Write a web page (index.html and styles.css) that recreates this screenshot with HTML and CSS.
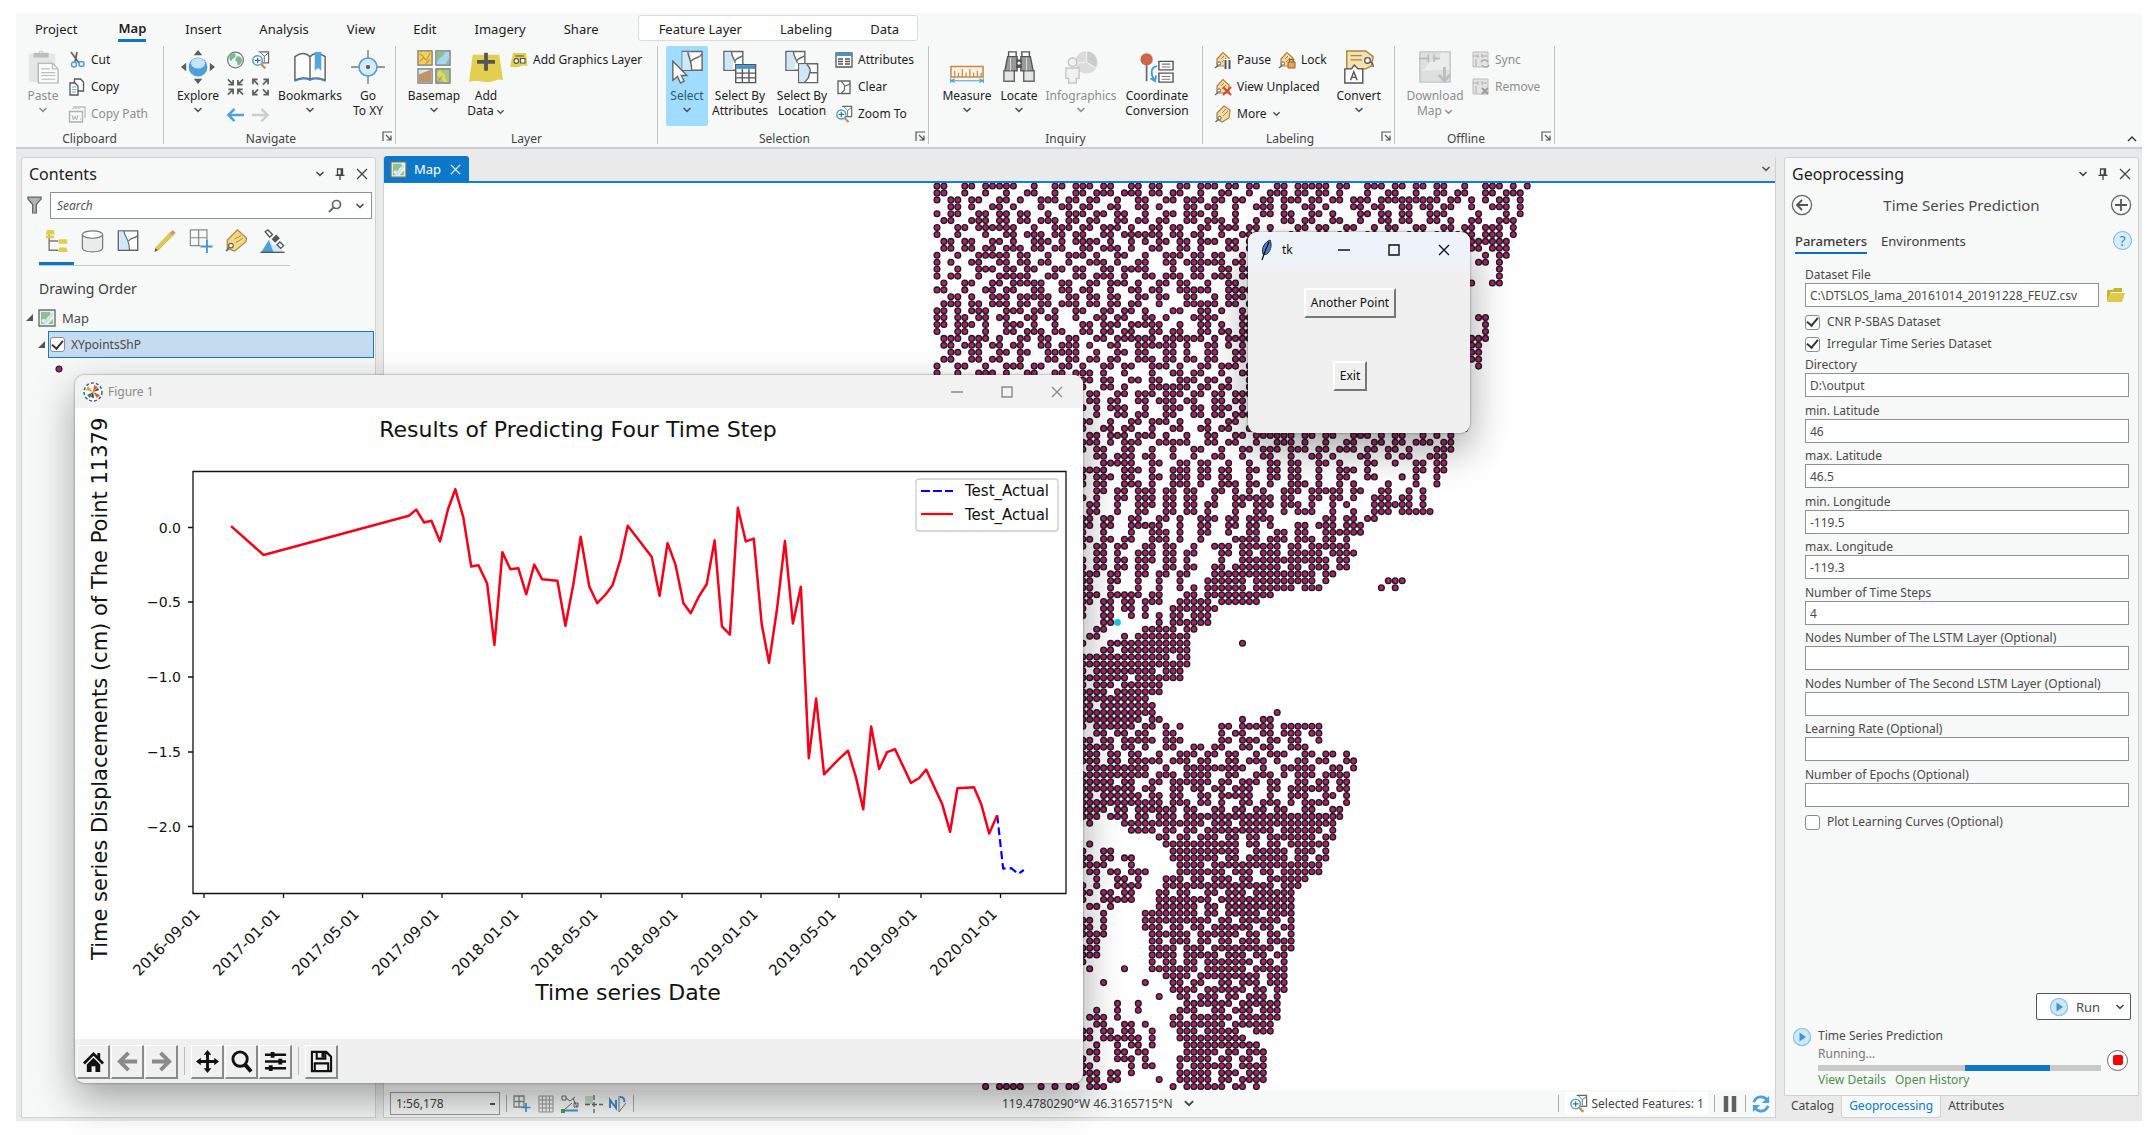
FILE: index.html
```html
<!DOCTYPE html>
<html lang="en">
<head>
<meta charset="utf-8">
<title>Time Series Prediction</title>
<link rel="stylesheet" href="styles.css">
</head>
<body>
<svg class="defs" aria-hidden="true">
  <defs>
    <symbol id="chev" viewBox="0 0 10 6"><path d="M1.5 1l3.5 3.4L8.500 1" fill="none" stroke="currentColor" stroke-width="1.6"/></symbol>
    <symbol id="x" viewBox="0 0 12 12"><path d="M1 1l10 10M11 1L1 11" fill="none" stroke="currentColor" stroke-width="1.3"/></symbol>
    <symbol id="pin" viewBox="0 0 10 12"><path d="M2.500 1h5v6h-5zM6.300 1v6M.5 7.300h9M5 7.500V12" fill="none" stroke="currentColor" stroke-width="1.300"/></symbol>
    <symbol id="launch" viewBox="0 0 10 10"><path d="M1 10V1h9M4 4l4.500 4.500M9 4.500V9H4.500" fill="none" stroke="#555" stroke-width="1.200"/></symbol>
    <symbol id="paste" viewBox="0 0 36 36"><path d="M3 4h28v30H3z" fill="#e4e5e5"/><path d="M8 3h16v5H8z" fill="#bdbfbf"/><circle cx="16" cy="3" r="2" fill="none" stroke="#bdbfbf"/><path d="M13 14h15l6 6v15H13z" fill="#fafafa" stroke="#a9a9a9" stroke-width="1.200"/><path d="M28 14v6h6M16 20h9M16 24h15M16 27h15M16 31h15" fill="none" stroke="#bbb" stroke-width="1.200"/></symbol>
    <symbol id="cut" viewBox="0 0 18 18"><path d="M3 1l8 11M9 1L7 11" stroke="#666" stroke-width="1.800" fill="none"/><circle cx="6" cy="13.500" r="2.500" fill="none" stroke="#4ea0d8" stroke-width="1.500"/><circle cx="13.500" cy="13" r="2.500" fill="none" stroke="#4ea0d8" stroke-width="1.500"/></symbol>
    <symbol id="copy" viewBox="0 0 18 18"><path d="M6.500 1h6l3 3v9h-9z" fill="#fff" stroke="#555" stroke-width="1.300"/><path d="M2 5h5l3 3v9H2z" fill="#fff" stroke="#555" stroke-width="1.300"/><path d="M4 9h4M4 11.500h4M4 14h4" stroke="#69b4e6"/></symbol>
    <symbol id="copypath" viewBox="0 0 18 18"><path d="M5 2h12v11" fill="none" stroke="#bbb" stroke-width="1.300"/><path d="M1.500 6.500h13V17h-13z" fill="#f7f7f7" stroke="#b0b0b0" stroke-width="1.300"/><path d="M4 10l1.500 5L7 11l1.500 4L10 10M12 14h1" fill="none" stroke="#b0b0b0"/><path d="M4 3.500h9" stroke="#bbb" stroke-dasharray="1.500 1.500"/></symbol>
    <symbol id="explore" viewBox="0 0 36 36"><path d="M18 0l4.500 5.500h-9zM18 36l4.500-5.500h-9zM0 18l5.500-4.500v9zM36 18l-5.500-4.500v9z" fill="#5c5c5c"/><circle cx="18" cy="18" r="10" fill="#4d9fd8"/><ellipse cx="18" cy="14" rx="7.500" ry="5.500" fill="#c5e4f7"/></symbol>
    <symbol id="globe" viewBox="0 0 20 20"><circle cx="10" cy="10" r="8.300" fill="#eef4f2" stroke="#777" stroke-width="1.300"/><path d="M5 4c3-2 6-1 5 2s-4 2-4 5c-3 0-3-5-1-7zM12 6c3 0 5 2 5 5-2 5-5 6-5 3s-3-3-2-5 1-3 2-3z" fill="#79b98d"/></symbol>
    <symbol id="zoomsel" viewBox="0 0 20 20"><path d="M8 1.500h10.500V13H12" fill="#fff" stroke="#666" stroke-width="1.300"/><path d="M10 2l4 4 4-3M14 6v6" fill="none" stroke="#666"/><path d="M10.500 14l4.500 5" stroke="#c98a4b" stroke-width="2.400"/><circle cx="7" cy="10.500" r="5" fill="#fff" stroke="#4ea0d8" stroke-width="1.600"/><path d="M4 10.500h6M7 7.500v6" stroke="#4c6a80" stroke-width="1.300"/></symbol>
    <symbol id="fixin" viewBox="0 0 20 20"><path d="M2 2l5 5M18 2l-5 5M2 18l5-5M18 18l-5-5M7.500 2.500v5h-5M12.500 2.500v5h5M7.500 17.500v-5h-5M12.500 17.500v-5h5" fill="none" stroke="#606060" stroke-width="1.800"/></symbol>
    <symbol id="fixout" viewBox="0 0 20 20"><path d="M7.500 7.500L2 2M12.500 7.500L18 2M7.500 12.500L2 18M12.500 12.500L18 18M2 7V2h5M18 7V2h-5M2 13v5h5M18 13v5h-5" fill="none" stroke="#606060" stroke-width="1.800"/></symbol>
    <symbol id="back" viewBox="0 0 20 16"><path d="M19 8H3M9 1.500L2.500 8 9 14.500" fill="none" stroke="currentColor" stroke-width="2.600"/></symbol>
    <symbol id="fwd" viewBox="0 0 20 16"><path d="M1 8h16M11 1.500L17.500 8 11 14.500" fill="none" stroke="currentColor" stroke-width="2.600"/></symbol>
    <symbol id="book" viewBox="0 0 36 36"><path d="M2 7c6-4 12-4 16 0v24c-4-2-11-2-16 1zM34 7c-6-4-12-4-16 0v24c4-2 11-2 16 1z" fill="#fff" stroke="#666" stroke-width="1.600"/><path d="M2 33c6-3 12-3 16-1 4-2 10-2 16 1" fill="none" stroke="#3f8fc6" stroke-width="1.500"/><path d="M23 2h7v20l-3.500-3-3.500 3z" fill="#56a6dc"/></symbol>
    <symbol id="goxy" viewBox="0 0 36 36"><path d="M18 0v10M18 26v10M0 18h10M26 18h10" stroke="#777" stroke-width="1.400"/><circle cx="18" cy="18" r="9.500" fill="#d3ebfa" stroke="#4ea0d8" stroke-width="1.700"/><circle cx="18" cy="18" r="2.200" fill="#555"/></symbol>
    <symbol id="basemap" viewBox="0 0 36 36"><g stroke="#777" stroke-width="1.300"><path d="M1 1h15v15H1z" fill="#ecd35c"/><path d="M20 1h15v15H20z" fill="#a8d5f2"/><path d="M1 20h15v15H1z" fill="#cfe6f7"/><path d="M20 20h15v15H20z" fill="#a5c987"/></g><path d="M3 12l4-4 3 3 4-8M3 4l4 3M9 15l5-5" stroke="#d78a3c" stroke-width="1.200" fill="none"/><path d="M21 2h9c-2 3-3 5-5 6s-3 5-4 5zM30 15l4-6v6z" fill="#8fbf86"/><path d="M2 34V26L14 21h1v13z" fill="#c39366"/><path d="M24 21c2 4 6 3 6 8s4 4 4 5h-6c0-5-6-5-7-8z" fill="#ecd55f"/><path d="M21 34c4-2 3-5 6-6" stroke="#e0773f" fill="none"/></symbol>
    <symbol id="adddata" viewBox="0 0 36 36"><path d="M4 5h28l4 27c-7-3-10 3-18 2S7 32 0 34z" fill="#e2cf4f"/><path d="M18 3v19M8.500 12.500h19" stroke="#555" stroke-width="4"/></symbol>
    <symbol id="graphics" viewBox="0 0 18 18"><path d="M3 2h13l1.500 13C13 13 11 17 0 16z" fill="#e2cf4f"/><circle cx="6.300" cy="10" r="2.300" fill="#fff" stroke="#555" stroke-width="1.200"/><path d="M10.500 7.500h4.500v4.500h-4.500zM5 5h9" fill="#fff" stroke="#555" stroke-width="1.200"/></symbol>
    <symbol id="select" viewBox="0 0 36 36"><path d="M13 1.500h21v20H13z" fill="#fff" stroke="#666" stroke-width="1.500"/><path d="M13 2h9v19h-9z" fill="#cfe8f8"/><path d="M19 2c0 5 4 9 4 19M22 12c4-5 8-2 12-8" fill="none" stroke="#666" stroke-width="1.500"/><path d="M3 12v20l5-4 3 7 4-2-3-6h6z" fill="#fff" stroke="#666" stroke-width="1.500"/></symbol>
    <symbol id="selattr" viewBox="0 0 36 36"><path d="M1 1.500h20v20H1z" fill="#fff" stroke="#666" stroke-width="1.500"/><path d="M2 2h7l2 8-1 11H2z" fill="#cfe8f8"/><path d="M9 2c0 5 4 9 4 12M12 12c4-5 5-3 9-6" fill="none" stroke="#666" stroke-width="1.500"/><path d="M13.500 15.500h21v19h-21z" fill="#fff" stroke="#555" stroke-width="1.500"/><path d="M14 16h20v4H14z" fill="#4793cc"/><path d="M14 24.500h20M14 29.500h20M20.500 20v15M27.500 20v15" stroke="#555" stroke-width="1.500"/></symbol>
    <symbol id="selloc" viewBox="0 0 36 36"><path d="M1 1.500h20v20H1z" fill="#fff" stroke="#666" stroke-width="1.500"/><path d="M2 2h7l2 8-1 11H2z" fill="#cfe8f8"/><path d="M9 2c0 5 4 9 4 12M12 12c4-5 5-3 9-6" fill="none" stroke="#666" stroke-width="1.500"/><path d="M14.500 14.500h20v20h-20z" fill="#fff" stroke="#666" stroke-width="1.500"/><path d="M15 15h8c7 7 2 9 2 14l-4 5h-6z" fill="#cfe8f8"/><path d="M23 15c7 7 2 9 2 14l-4 5M26 24h8" fill="none" stroke="#666" stroke-width="1.500"/></symbol>
    <symbol id="attrs" viewBox="0 0 18 18"><path d="M1 2h16v14H1z" fill="#fff" stroke="#555" stroke-width="1.300"/><path d="M1 2h16v3H1z" fill="#4793cc"/><path d="M3 8h5M10 8h5M3 10.500h5M10 10.500h5M3 13h5M10 13h5" stroke="#555" stroke-width="1.300"/></symbol>
    <symbol id="clear" viewBox="0 0 18 18"><path d="M3 3h12v12.500H3z" fill="#fff" stroke="#666" stroke-width="1.400"/><path d="M6 3l4 5 5-2M9.500 8v4l-3 3" fill="none" stroke="#666" stroke-width="1.200"/></symbol>
    <symbol id="measure" viewBox="0 0 36 36"><path d="M1 17.500h34v11H1z" fill="#fdf3e4" stroke="#c08a4c" stroke-width="1.600"/><path d="M5 28v-6M9 28v-4M13 28v-8M17 28v-4M21 28v-8M25 28v-4M29 28v-6M33 28v-4" stroke="#c08a4c" stroke-width="1.300"/><path d="M1 32.500h34M5 30.500l-3.500 2L5 34.500M31 30.500l3.500 2-3.500 2M.7 30v5M35.300 30v5" stroke="#4ea0d8" fill="none" stroke-width="1.200"/></symbol>
    <symbol id="locate" viewBox="0 0 36 36"><path d="M7 2h8v5H7zM21 2h8v5h-8z" fill="#fff" stroke="#555" stroke-width="1.500"/><path d="M6 7h10v15H3zM20 7h10l3 15H20z" fill="#9a9a9a" stroke="#555" stroke-width="1.500"/><path d="M15 10h6v9h-6z" fill="#555"/><path d="M2 22h11v11H2zM23 22h11v11H23z" fill="#e5e5e5" stroke="#666" stroke-width="1.500"/><path d="M9 8v14M26 8v14" stroke="#ddd"/><circle cx="18" cy="14" r="1.500" fill="#fff"/></symbol>
    <symbol id="info" viewBox="0 0 36 36"><circle cx="24" cy="13" r="12" fill="#dcdcdc"/><path d="M24 13V1a12 12 0 0 1 10 18zM24 13L12 14" fill="#cbcbcb" stroke="#f7f7f7"/><circle cx="9" cy="13" r="4.500" fill="#f1f1f1" stroke="#c6c6c6" stroke-width="1.500"/><path d="M2 19h14v11h-3v5H5v-5H2z" fill="#f1f1f1" stroke="#c6c6c6" stroke-width="1.500"/></symbol>
    <symbol id="coord" viewBox="0 0 36 36"><path d="M7 10v23" stroke="#666" stroke-width="1.800"/><circle cx="7" cy="10" r="6.500" fill="#cf6548"/><path d="M20 12h15v9H20zM20 24.500h15v9.500H20z" fill="#fff" stroke="#555" stroke-width="1.500"/><path d="M23 15h9M23 18h9M23 28h9M23 31h9" stroke="#777" stroke-width="1.200"/><path d="M18 17c-7 1-7 9-3 14M11 30l5 3 1-6" fill="none" stroke="#3f9ad6" stroke-width="1.800"/></symbol>
    <symbol id="tag" viewBox="0 0 18 18"><path d="M3 8l7-7 6 4-1 8-7 4-5-3z" fill="#f3dca4" stroke="#ad8242" stroke-width="1.200"/><path d="M8 8l4-4M9 11l5-5" stroke="#ad8242"/><circle cx="5.500" cy="13" r="1.700" fill="#fff" stroke="#666"/><path d="M4.500 14.500L1.500 17" stroke="#666" stroke-width="1.400"/></symbol>
    <symbol id="tagtop" viewBox="0 0 18 18"><path d="M3 8l6-6.500L15 7v8H3z" fill="#f3dca4" stroke="#ad8242" stroke-width="1.200"/><path d="M7 8l3-3M8 11l4-4" stroke="#ad8242"/><circle cx="5" cy="12.500" r="1.700" fill="#fff" stroke="#666"/><path d="M4 14.500L1 17" stroke="#666" stroke-width="1.400"/></symbol>
    <symbol id="convert" viewBox="0 0 36 36"><path d="M5 1h20l8 6-2 10-6 3H5z" fill="#f6e2ae" stroke="#ad8242" stroke-width="1.500"/><path d="M9 6h12M9 10.500h12" stroke="#ad8242" stroke-width="1.300"/><circle cx="27" cy="11" r="3" fill="#fff" stroke="#555" stroke-width="1.400"/><path d="M29 13c3-1 4 2 4 5" fill="none" stroke="#555" stroke-width="1.400"/><path d="M3 20h7l3-4 4 4h5v15H3z" fill="#fff" stroke="#555" stroke-width="1.500"/><path d="M9 32l3.500-9 3.500 9M10.500 29h4" fill="none" stroke="#555" stroke-width="1.500"/></symbol>
    <symbol id="download" viewBox="0 0 36 36"><path d="M2 2h32v32H2z" fill="#dedfdf" stroke="#c3c3c3" stroke-width="1.500"/><path d="M3 22c10-4 4-9 14-10s6-8 7-9h9v18" fill="#ececec"/><path d="M1 9h10M23 9h-6M11 5v8M17 5v8" stroke="#b5b5b5" stroke-width="1.500"/><path d="M28 18v14M22 26l6 7 6-7" stroke="#bdbdbd" stroke-width="3" fill="none"/></symbol>
    <symbol id="sync" viewBox="0 0 18 18"><path d="M1 1h15v15H1z" fill="#e3e3e3" stroke="#bbb"/><path d="M1 5h5M10 5h5M6 3v4M10 3v4M4 8v7" stroke="#aaa"/><path d="M9 11c2-3 6-2 7 0M17 14c-2 3-6 2-7 0" stroke="#aaa" stroke-width="1.600" fill="#f7f8f8"/></symbol>
    <symbol id="remove" viewBox="0 0 18 18"><path d="M1 1h15v15H1z" fill="#e3e3e3" stroke="#bbb"/><path d="M1 5h5M10 5h5M6 3v4M10 3v4M4 8v7" stroke="#aaa"/><path d="M10 10l6 6M16 10l-6 6" stroke="#999" stroke-width="1.800"/></symbol>
    <symbol id="mapicon" viewBox="0 0 18 18"><path d="M1 1h16v16H1z" fill="#eaf3ea" stroke="#6d6d6d" stroke-width="1.400"/><path d="M3 3h9c2 3-2 4-3 6s-2 2-3 1-2 2-3 2z" fill="#8fbf95"/><path d="M15 3c-4 4-3 6-6 7s-4 4-4 5h3l3-3 2-4 2-1z" fill="#c7e3f6"/><path d="M10 15l5-5v5zM3 11l3 4H3z" fill="#8fbf95"/></symbol>
    <symbol id="play" viewBox="0 0 20 20"><circle cx="10" cy="10" r="8.600" fill="#cfe8f8" stroke="#8cc4ea" stroke-width="1.300"/><path d="M7.500 5.500L14 10l-6.500 4.500z" fill="#3f95cf"/></symbol>
    <symbol id="grid" viewBox="0 0 18 18"><path d="M1 1h10v11H1zM6 1v11M1 6.500h10" fill="none" stroke="#888" stroke-width="1.300"/><path d="M13 8v9M8.500 12.500h9" stroke="#4595cc" stroke-width="1.700"/></symbol>
  </defs>
</svg>
<div class="app">
  <header class="ribbon">
    <nav class="tabs">
      <a href="#">Project</a><a href="#" class="on">Map</a><a href="#">Insert</a><a href="#">Analysis</a><a href="#">View</a><a href="#">Edit</a><a href="#">Imagery</a><a href="#">Share</a>
      <div class="context"><a href="#">Feature Layer</a><a href="#">Labeling</a><a href="#">Data</a></div>
    </nav>
    <div class="groups">
      <section class="group g-clip">
        <div class="tools">
          <button class="big off w44"><svg><use href="#paste"/></svg><span>Paste</span><svg class="chev"><use href="#chev"/></svg></button>
          <div class="col">
            <button class="small"><svg><use href="#cut"/></svg>Cut</button>
            <button class="small"><svg><use href="#copy"/></svg>Copy</button>
            <button class="small off"><svg><use href="#copypath"/></svg>Copy Path</button>
          </div>
        </div>
        <h2>Clipboard</h2>
      </section>
      <section class="group g-nav launcher">
        <div class="tools">
          <button class="big w52"><svg><use href="#explore"/></svg><span>Explore</span><svg class="chev"><use href="#chev"/></svg></button>
          <div class="navgrid">
            <svg><use href="#globe"/></svg><svg><use href="#zoomsel"/></svg>
            <svg><use href="#fixin"/></svg><svg><use href="#fixout"/></svg>
            <svg class="blue"><use href="#back"/></svg><svg class="grey"><use href="#fwd"/></svg>
          </div>
          <button class="big w72"><svg><use href="#book"/></svg><span>Bookmarks</span><svg class="chev"><use href="#chev"/></svg></button>
          <button class="big w44"><svg><use href="#goxy"/></svg><span>Go<br>To XY</span></button>
        </div>
        <h2>Navigate</h2><svg class="launch"><use href="#launch"/></svg>
      </section>
      <section class="group g-layer">
        <div class="tools">
          <button class="big w60"><svg><use href="#basemap"/></svg><span>Basemap</span><svg class="chev"><use href="#chev"/></svg></button>
          <button class="big w44"><svg><use href="#adddata"/></svg><span>Add<br>Data<svg class="inchev"><use href="#chev"/></svg></span></button>
          <div class="col">
            <button class="small"><svg><use href="#graphics"/></svg>Add Graphics Layer</button>
          </div>
        </div>
        <h2>Layer</h2>
      </section>
      <section class="group g-sel launcher">
        <div class="tools">
          <button class="big active w42"><svg><use href="#select"/></svg><span>Select</span><svg class="chev"><use href="#chev"/></svg></button>
          <button class="big w64"><svg><use href="#selattr"/></svg><span>Select By<br>Attributes</span></button>
          <button class="big w60"><svg><use href="#selloc"/></svg><span>Select By<br>Location</span></button>
          <div class="col">
            <button class="small"><svg><use href="#attrs"/></svg>Attributes</button>
            <button class="small"><svg><use href="#clear"/></svg>Clear</button>
            <button class="small"><svg><use href="#zoomsel"/></svg>Zoom To</button>
          </div>
        </div>
        <h2>Selection</h2><svg class="launch"><use href="#launch"/></svg>
      </section>
      <section class="group g-inq">
        <div class="tools">
          <button class="big w60"><svg><use href="#measure"/></svg><span>Measure</span><svg class="chev"><use href="#chev"/></svg></button>
          <button class="big w44"><svg><use href="#locate"/></svg><span>Locate</span><svg class="chev"><use href="#chev"/></svg></button>
          <button class="big off w80"><svg><use href="#info"/></svg><span>Infographics</span><svg class="chev"><use href="#chev"/></svg></button>
          <button class="big w72"><svg><use href="#coord"/></svg><span>Coordinate<br>Conversion</span></button>
        </div>
        <h2>Inquiry</h2>
      </section>
      <section class="group g-lab launcher">
        <div class="tools">
          <div class="col">
            <div class="pair">
              <button class="small"><svg viewBox="0 0 18 18"><use href="#tagtop"/><path d="M10 8h8v10h-8z" fill="#f7f8f8"/><path d="M11.500 9v9M15.500 9v9" stroke="#555" stroke-width="2"/></svg>Pause</button>
              <button class="small"><svg viewBox="0 0 18 18"><use href="#tagtop"/><path d="M10 11h7v6h-7z" fill="#e6a654" stroke="#96622a"/><path d="M11.500 11V8.500h4V11" fill="none" stroke="#96622a" stroke-width="1.300"/></svg>Lock</button>
            </div>
            <button class="small"><svg viewBox="0 0 18 18"><use href="#tagtop"/><path d="M9 9l8 8M17 9l-8 8" stroke="#d34a2d" stroke-width="2.200"/></svg>View Unplaced</button>
            <button class="small"><svg><use href="#tag"/></svg>More<svg class="inchev"><use href="#chev"/></svg></button>
          </div>
          <button class="big w52"><svg><use href="#convert"/></svg><span>Convert</span><svg class="chev"><use href="#chev"/></svg></button>
        </div>
        <h2>Labeling</h2><svg class="launch"><use href="#launch"/></svg>
      </section>
      <section class="group g-off launcher">
        <div class="tools">
          <button class="big off w64"><svg><use href="#download"/></svg><span>Download<br>Map<svg class="inchev"><use href="#chev"/></svg></span></button>
          <div class="col">
            <button class="small off"><svg><use href="#sync"/></svg>Sync</button>
            <button class="small off"><svg><use href="#remove"/></svg>Remove</button>
          </div>
        </div>
        <h2>Offline</h2><svg class="launch"><use href="#launch"/></svg>
      </section>
      <button class="collapse" aria-label="Collapse ribbon"><svg viewBox="0 0 10 6"><path d="M1 5l4-4 4 4" fill="none" stroke="#333" stroke-width="1.400"/></svg></button>
    </div>
  </header>

  <main class="workspace">
    <aside class="pane contents">
      <div class="panehead"><h1>Contents</h1><svg class="c"><use href="#chev"/></svg><svg class="p"><use href="#pin"/></svg><svg class="k"><use href="#x"/></svg></div>
      <div class="searchrow">
        <svg class="funnel" viewBox="0 0 16 20"><path d="M1 1h14v2L10 9v9H6V9L1 3z" fill="#b3b3b3" stroke="#666" stroke-width="1.300"/></svg>
        <label class="search"><input type="text" placeholder="Search" aria-label="Search"><svg class="mag" viewBox="0 0 14 14"><circle cx="8.500" cy="5.500" r="4" fill="none" stroke="#666" stroke-width="1.700"/><path d="M5.500 8.500L1 13" stroke="#666" stroke-width="2"/></svg><svg class="c"><use href="#chev"/></svg></label>
      </div>
      <div class="views">
        <svg class="on" viewBox="0 0 26 26"><path d="M5 6v17h10M5 13h10" fill="none" stroke="#777" stroke-width="1.500"/><path d="M3 1h7l1 5H1zM2 7h8l1 3H1zM16 11h8l1 5H15zM16 20h8l1 5H15z" fill="#e0cd4c"/></svg>
        <svg viewBox="0 0 26 26"><path d="M2 6v15c2 5 20 5 22 0V6" fill="#ececec" stroke="#777" stroke-width="1.300"/><ellipse cx="13" cy="6" rx="11" ry="4" fill="#fff" stroke="#777" stroke-width="1.300"/></svg>
        <svg viewBox="0 0 26 26"><path d="M2 2h21v21H2z" fill="#fff" stroke="#666" stroke-width="1.500"/><path d="M3 3h5c1 7 6 9 5 19H3z" fill="#cfe8f8"/><path d="M8 2c1 8 6 8 6 21M13 13c3-4 6-2 10-6" fill="none" stroke="#666" stroke-width="1.300"/></svg>
        <svg viewBox="0 0 26 26"><path d="M3 21L19 4l3 3L6 23z" fill="#e3cb45" stroke="#b79c2a" stroke-width=".700"/><path d="M19 4l3-3 3 3-3 3z" fill="#e08a78"/><path d="M3 21l-1 4 4-2z" fill="#555"/></svg>
        <svg viewBox="0 0 26 26"><path d="M2 1h18v17H2zM11 1v17M2 9.500h18" fill="none" stroke="#888" stroke-width="1.300"/><path d="M13 12h13v13H13z" fill="#f7f8f8"/><path d="M20 12v14M13 19h13" stroke="#4595cc" stroke-width="2"/></svg>
        <svg viewBox="0 0 26 26"><path d="M3 12L14 1l10 9-1 4-12 10-8-3z" fill="#f3d883" stroke="#ad8242" stroke-width="1.300"/><path d="M11 11l7-4M12 15l8-5" stroke="#ad8242"/><circle cx="7" cy="18" r="2.500" fill="#fff" stroke="#666" stroke-width="1.300"/><path d="M5 20l-3 4" stroke="#666" stroke-width="2"/></svg>
        <svg viewBox="0 0 26 26"><path d="M1 25L9 12l8 13z" fill="#4ea0d8"/><path d="M9 12l4 6 5-2 7 9H14z" fill="#cfe8f8"/><path d="M0 25.300h26" stroke="#555" stroke-width="1.500"/><path d="M5 3l3-2 5 5-3 3zM18 17l3-3 4 4-3 3z" fill="#fff" stroke="#555" stroke-width="1.500"/><path d="M12 11l5-5 4 4-5 5z" fill="#555"/></svg>
      </div>
      <h3>Drawing Order</h3>
      <div class="node"><i class="tri"></i><svg><use href="#mapicon"/></svg><span>Map</span></div>
      <div class="layer"><i class="tri"></i><label><input type="checkbox" checked><span>XYpointsShP</span></label></div>
      <svg class="sym" viewBox="0 0 8 8"><circle cx="4" cy="4" r="3" fill="#a8246b" stroke="#222" stroke-width="1.200"/></svg>
    </aside>

    <section class="mapview">
      <div class="maptabs"><div class="maptab"><svg><use href="#mapicon"/></svg><span>Map</span><svg class="k"><use href="#x"/></svg></div><svg class="c"><use href="#chev"/></svg></div>
      <svg class="canvas" id="points" aria-label="Point layer"></svg>
      <div class="status">
        <select class="scale" aria-label="Scale"><option>1:56,178</option></select>
        <i class="bar"></i>
        <svg><use href="#grid"/></svg>
        <svg viewBox="0 0 18 18"><path d="M2 1h14v16H2zM5.500 1v16M9 1v16M12.500 1v16M2 5h14M2 9h14M2 13h14" fill="none" stroke="#999"/></svg>
        <svg viewBox="0 0 18 18"><path d="M1 1h4v4H1zM13 8h4v4h-4zM5 3l4 3 5-4M3 15l8-7M12 3l4 9" fill="none" stroke="#666"/><path d="M2 15.500h15" stroke="#4595cc" stroke-width="2"/><path d="M0 14h4v4H0z" fill="#4d9a50"/></svg>
        <svg viewBox="0 0 18 18"><path d="M0 1h8v8H0z" fill="#c4dfc4"/><path d="M9 0v18M0 9.500h18" stroke="#666" stroke-width="1.300" stroke-dasharray="5 2"/></svg>
        <svg viewBox="0 0 18 18"><path d="M1 13V5l6 8V5" fill="none" stroke="#3f8fc6" stroke-width="2"/><path d="M10 1v16M10 17l7-9" stroke="#777" fill="none"/><path d="M11 2c4 0 5 3 4 5" stroke="#3f8fc6" stroke-width="2" fill="none"/></svg>
        <i class="bar"></i>
        <span class="coords">119.4780290°W 46.3165715°N</span><svg class="c"><use href="#chev"/></svg>
        <i class="bar"></i>
        <span class="feat"><svg><use href="#zoomsel"/></svg>Selected Features: 1</span>
        <i class="bar"></i>
        <svg viewBox="0 0 18 18"><path d="M5 1v16M13 1v16" stroke="#606060" stroke-width="4.500"/></svg>
        <i class="bar"></i>
        <svg class="refresh" viewBox="0 0 20 20"><path d="M2 8c3-8 12-7 15-2M18 12c-3 8-12 7-15 2" fill="none" stroke="#4ea0d8" stroke-width="3"/><path d="M19 1v8h-8zM1 19v-8h8z" fill="#4ea0d8"/></svg>
      </div>
    </section>

    <aside class="geocol">
      <div class="pane geo">
        <div class="panehead"><h1>Geoprocessing</h1><svg class="c"><use href="#chev"/></svg><svg class="p"><use href="#pin"/></svg><svg class="k"><use href="#x"/></svg></div>
        <div class="toolhead">
          <svg viewBox="0 0 22 22"><circle cx="11" cy="11" r="9.600" fill="none" stroke="#666" stroke-width="1.300"/><path d="M17 11H6M11 6l-5 5 5 5" fill="none" stroke="#555" stroke-width="1.800"/></svg>
          <span>Time Series Prediction</span>
          <svg viewBox="0 0 22 22"><circle cx="11" cy="11" r="9.600" fill="none" stroke="#666" stroke-width="1.300"/><path d="M11 5v12M5 11h12" stroke="#555" stroke-width="1.800"/></svg>
        </div>
        <div class="geotabs"><a href="#" class="on">Parameters</a><a href="#">Environments</a><span class="help">?</span></div>
        <form class="params">
          <div class="field"><label for="f0">Dataset File</label><div class="filerow"><input id="f0" type="text" value="C:\DTSLOS_lama_20161014_20191228_FEUZ.csv"><svg viewBox="0 0 18 14"><path d="M0 14V2h6l1-2h8v4H4z" fill="#c9b432"/><path d="M4 5h14l-3 9H0z" fill="#dfc949"/></svg></div></div>
          <label class="check"><input type="checkbox" checked>CNR P-SBAS Dataset</label>
          <label class="check"><input type="checkbox" checked>Irregular Time Series Dataset</label>
          <div class="field"><label for="f1">Directory</label><input id="f1" type="text" value="D:\output"></div>
          <div class="field"><label for="f2">min. Latitude</label><input id="f2" type="text" value="46"></div>
          <div class="field"><label for="f3">max. Latitude</label><input id="f3" type="text" value="46.5"></div>
          <div class="field"><label for="f4">min. Longitude</label><input id="f4" type="text" value="-119.5"></div>
          <div class="field"><label for="f5">max. Longitude</label><input id="f5" type="text" value="-119.3"></div>
          <div class="field"><label for="f6">Number of Time Steps</label><input id="f6" type="text" value="4"></div>
          <div class="field"><label for="f7">Nodes Number of The LSTM Layer (Optional)</label><input id="f7" type="text"></div>
          <div class="field"><label for="f8">Nodes Number of The Second LSTM Layer (Optional)</label><input id="f8" type="text"></div>
          <div class="field"><label for="f9">Learning Rate (Optional)</label><input id="f9" type="text"></div>
          <div class="field"><label for="f10">Number of Epochs (Optional)</label><input id="f10" type="text"></div>
          <label class="check"><input type="checkbox">Plot Learning Curves (Optional)</label>
        </form>
        <button class="run"><svg class="pl"><use href="#play"/></svg><span>Run</span><svg class="c"><use href="#chev"/></svg></button>
        <div class="job">
          <svg class="pl"><use href="#play"/></svg>
          <div class="jobtext">
            <div>Time Series Prediction</div>
            <div class="dim">Running...</div>
            <div class="progress"><i></i></div>
            <div class="links"><a href="#">View Details</a><a href="#">Open History</a></div>
          </div>
          <button class="stop" aria-label="Stop"><i></i></button>
        </div>
      </div>
      <nav class="docktabs"><a href="#">Catalog</a><a href="#" class="on">Geoprocessing</a><a href="#">Attributes</a></nav>
    </aside>
  </main>

  <section class="window figure">
    <div class="titlebar">
      <svg class="mpl" viewBox="0 0 20 20"><circle cx="10" cy="10" r="9" fill="#fff" stroke="#2b6a9b" stroke-width="1.500" stroke-dasharray="3 2"/><path d="M10 10L5 4 3 8z" fill="#e9a13b"/><path d="M10 10l1-7 4 2z" fill="#e0602c"/><path d="M10 10l7 3-3 3z" fill="#d95a2b"/><path d="M10 10l-6 3 3 3z" fill="#3c7f53"/><path d="M10 10l1 6-3-1zM10 10l6-2-1-2z" fill="#333"/></svg>
      <span>Figure 1</span>
      <svg viewBox="0 0 12 12"><path d="M0 6h12" stroke="currentColor" stroke-width="1.400"/></svg><svg viewBox="0 0 12 12"><path d="M1 1h10v10H1z" fill="none" stroke="currentColor" stroke-width="1.400"/></svg><svg><use href="#x"/></svg>
    </div>
    <svg class="plot" viewBox="75 408 1008 631">
      <g font-family="DejaVu Sans" fill="#111">
        <text x="578" y="437" font-size="22" text-anchor="middle">Results of Predicting Four Time Step</text>
        <text x="628" y="1000" font-size="22" text-anchor="middle">Time series Date</text>
        <text transform="translate(107 960) rotate(-90)" font-size="21">Time series Displacements (cm) of The Point 11379</text>
        <g font-size="14" text-anchor="end"><text x="181" y="533">0.0</text><text x="181" y="607">−0.5</text><text x="181" y="682">−1.0</text><text x="181" y="757">−1.5</text><text x="181" y="832">−2.0</text></g>
        <g font-size="15" text-anchor="end">
          <text transform="translate(201 915) rotate(-45)">2016-09-01</text><text transform="translate(281 915) rotate(-45)">2017-01-01</text><text transform="translate(360 915) rotate(-45)">2017-05-01</text><text transform="translate(440 915) rotate(-45)">2017-09-01</text><text transform="translate(520 915) rotate(-45)">2018-01-01</text><text transform="translate(599 915) rotate(-45)">2018-05-01</text><text transform="translate(679 915) rotate(-45)">2018-09-01</text><text transform="translate(759 915) rotate(-45)">2019-01-01</text><text transform="translate(837 915) rotate(-45)">2019-05-01</text><text transform="translate(918 915) rotate(-45)">2019-09-01</text><text transform="translate(998 915) rotate(-45)">2020-01-01</text>
        </g>
      </g>
      <path d="M193 471.500H1066V893.500H193zM193 527.500h-5M193 602h-5M193 677h-5M193 752h-5M193 826.500h-5M204 893v5M283.500 893v5M362.500 893v5M442 893v5M522 893v5M601 893v5M682 893v5M761 893v5M839 893v5M921 893v5M1000.500 893v5" fill="none" stroke="#111" stroke-width="1.300"/>
      <g transform="translate(60 370) scale(.66326 .35714)" fill="none" stroke-linejoin="round">
        <polyline vector-effect="non-scaling-stroke" stroke="#00f" stroke-width="2.200" stroke-dasharray="8 4" points="1413,1247 1422,1396 1434,1395 1445,1411 1453,1400"/>
        <polyline vector-effect="non-scaling-stroke" stroke="#f5001a" stroke-width="2.500" points="258,437 307,518 526,408 537,391 549,427 560,422 573,480 585,390 596,334 608,412 620,550 631,547 644,598 655,770 667,510 679,558 691,555 703,628 715,545 727,586 750,590 762,716 774,600 785,467 798,606 810,653 822,630 833,603 845,530 856,436 892,523 904,632 916,485 928,545 940,653 951,681 963,635 975,600 987,477 998,718 1010,741 1022,386 1034,480 1046,472 1058,712 1069,820 1081,670 1093,479 1105,710 1117,607 1129,1087 1140,920 1152,1132 1175,1088 1188,1066 1200,1140 1211,1230 1223,998 1235,1117 1247,1070 1259,1062 1283,1156 1295,1143 1306,1119 1330,1215 1342,1293 1353,1171 1378,1168 1389,1216 1401,1298 1413,1247"/>
      </g>
      <rect x="916" y="479" width="142" height="52" rx="3" fill="#fff" stroke="#ccc" stroke-width="1.300"/>
      <path d="M921 491h32" stroke="#00f" stroke-width="2.200" stroke-dasharray="9 3"/><path d="M921 514h32" stroke="#f00" stroke-width="2.200"/>
      <g font-family="DejaVu Sans" font-size="15" fill="#111"><text x="965" y="496">Test_Actual</text><text x="965" y="520">Test_Actual</text></g>
    </svg>
    <div class="navbar">
      <button aria-label="Home"><svg viewBox="0 0 24 24"><path d="M12 2L1 13l2 2 9-9 9 9 2-2-4-4V3h-3v3zM5 15v8h5v-6h4v6h5v-8l-7-7z" fill="#111"/></svg></button>
      <button aria-label="Back"><svg viewBox="0 0 24 24"><path d="M22 12H5M13 3l-9 9 9 9" fill="none" stroke="#8a8a8a" stroke-width="4"/></svg></button>
      <button aria-label="Forward"><svg viewBox="0 0 24 24"><path d="M2 12h17M11 3l9 9-9 9" fill="none" stroke="#8a8a8a" stroke-width="4"/></svg></button>
      <i></i>
      <button aria-label="Pan"><svg viewBox="0 0 24 24"><path d="M12 2v20M2 12h20" stroke="#111" stroke-width="3"/><path d="M12 0l4 5H8zM12 24l4-5H8zM0 12l5-4v8zM24 12l-5-4v8z" fill="#111"/></svg></button>
      <button aria-label="Zoom"><svg viewBox="0 0 24 24"><circle cx="10.500" cy="9.500" r="7.500" fill="none" stroke="#111" stroke-width="3"/><path d="M15.500 15l6.500 7.500" stroke="#111" stroke-width="4"/></svg></button>
      <button aria-label="Subplots"><svg viewBox="0 0 24 24"><path d="M1 5h22M1 12h22M1 19h22" stroke="#111" stroke-width="2.500"/><path d="M9 2v6M17 9v6M7 16v6" stroke="#111" stroke-width="4"/></svg></button>
      <i></i>
      <button aria-label="Save"><svg viewBox="0 0 24 24"><path d="M2 2h15l5 5v15H2zM7 2v7h9V2M5 22v-8h14v8" fill="none" stroke="#111" stroke-width="2.200"/><path d="M12 3h3v5h-3z" fill="#111"/></svg></button>
    </div>
  </section>

  <section class="window tk">
    <div class="titlebar">
      <svg class="feather" viewBox="0 0 12 22"><path d="M10 1c2 4 1 10-2 13-2 2-4 2-5 1C1 9 5 3 10 1z" fill="#4a7fd0" stroke="#222"/><path d="M9 3L4 15 2 21" fill="none" stroke="#111" stroke-width="1.300"/></svg>
      <span>tk</span>
      <svg viewBox="0 0 12 12"><path d="M0 6h12" stroke="currentColor" stroke-width="1.400"/></svg><svg viewBox="0 0 12 12"><path d="M1 1h10v10H1z" fill="none" stroke="currentColor" stroke-width="1.400"/></svg><svg><use href="#x"/></svg>
    </div>
    <div class="tkbody"><button>Another Point</button><button>Exit</button></div>
  </section>
</div>
<script src="points.js"></script>
</body>
</html>
```
FILE: styles.css
```css
* { box-sizing: border-box; }
body { margin: 0; background: #fff; font: 13px/18px "Noto Sans", sans-serif; color: #4a4a4a; }
h1, h2, h3 { margin: 0; font-weight: 400; }
a { color: inherit; text-decoration: none; }
button, input, select { font: inherit; color: inherit; }
button { background: none; border: 0; padding: 0; }
svg { display: block; flex: none; }
.defs { position: absolute; width: 0; height: 0; }
.app { position: relative; display: flex; flex-direction: column; height: calc(100vh - 27px); margin: 13px 13px 14px 16px; background: #eaeaea; }

.ribbon { height: 136px; background: #f7f8f8; border-bottom: 2px solid #c9ccd2; color: #1c1c1c; }
.tabs { display: flex; gap: 38px; height: 33px; padding: 2px 0 0 19px; align-items: flex-start; }
.tabs a { line-height: 24px; padding-top: 2px; border-bottom: 3px solid transparent; }
.tabs .on { margin: 0 1px 0 3px; border-color: #0c78ca; font-weight: 600; line-height: 22px; }
.context { display: flex; gap: 38px; height: 26px; margin-left: 1px; padding: 0 18px 0 20px; background: #fff; border: 1px solid #dcdcdc; border-radius: 3px; }
.context a { padding-top: 1px; }
.groups { display: flex; }
.group { position: relative; flex: none; border-right: 1px solid #c3c3c3; height: 98px; }
.g-clip { width: 148px; } .g-nav { width: 232px; } .g-layer { width: 262px; } .g-sel { width: 271px; }
.g-inq { width: 274px; } .g-lab { width: 192px; } .g-off { width: 160px; }
.tools { display: flex; height: 80px; padding-left: 6px; }
.group h2 { font-size: 12px; line-height: 18px; margin-top: 4px; text-align: center; color: #444; }
.launcher h2 { padding-right: 17px; }
.launch { position: absolute; right: 3px; bottom: 3px; width: 10px; height: 10px; }
.big { display: flex; flex: none; flex-direction: column; align-items: center; padding-top: 3px; line-height: 15px; font-size: 12px; border-radius: 2px; }
.big > svg { width: 34px; height: 36px; margin-bottom: 3px; }
.big .chev { width: 10px; height: 6px; margin-top: 4px; color: #555; }
.inchev { display: inline-block; width: 9px; height: 6px; margin-left: 2px; vertical-align: middle; color: #555; }
.small .inchev { width: 9px; height: 6px; margin: 0; }
.w42 { width: 42px; } .w44 { width: 44px; } .w52 { width: 52px; } .w60 { width: 60px; } .w64 { width: 64px; } .w72 { width: 72px; } .w80 { width: 80px; }
.off, .off .chev, .off .inchev { color: #8d8d8d; }
.active { background: #9fdcff; color: #2c5a78; }
.pair { display: flex; gap: 7px; }
.small { display: flex; align-items: center; gap: 5px; height: 27px; font-size: 12px; white-space: nowrap; }
.small svg { width: 18px; height: 18px; }
.navgrid { display: grid; grid-template-columns: 20px 20px; gap: 6px 5px; margin: 0 3px 0 2px; padding-top: 4px; }
.navgrid svg { width: 19px; height: 20px; }
.blue { color: #4ea0d8; } .grey { color: #ccc; }
.g-nav .tools { padding-left: 8px; }
.g-inq .tools { padding-left: 8px; }
.g-clip .tools { padding-left: 5px; } .g-clip .col { padding-left: 3px; }
.g-lab .tools { padding-left: 11px; gap: 6px; }
.g-layer .tools { padding-left: 8px; } .g-layer .col { padding-left: 2px; }
.g-sel .tools { padding-left: 8px; } .g-sel .col { padding-left: 3px; }
.g-off .tools { padding-left: 8px; } .g-off .col { padding-left: 5px; }
.collapse { margin: 90px 5px 0 auto; height: 6px; }
.collapse svg { width: 10px; height: 6px; }

.workspace { display: flex; flex: 1; min-height: 0; padding: 8px 3px 3px 5px; }
.pane { background: #f7f8f8; border: 1px solid #cfd1d4; border-radius: 3px 3px 0 0; }
.contents { width: 355px; flex: none; margin-right: 7px; }
.panehead { display: flex; align-items: center; height: 34px; padding: 0 7px 2px; }
.panehead h1 { flex: 1; font-size: 16px; line-height: 24px; color: #1c1c1c; }
.panehead svg { color: #444; }
.c { width: 10px; height: 6px; } .p { width: 10px; height: 12px; margin: 0 11px 0 10px; } .k { width: 12px; height: 12px; }
.searchrow { display: flex; align-items: center; gap: 8px; padding: 0 3px 0 5px; }
.funnel { width: 15px; height: 19px; }
.search { display: flex; flex: 1; align-items: center; height: 27px; padding-right: 6px; background: #fff; border: 1px solid #909090; }
.search input { flex: 1; min-width: 0; border: 0; outline: 0; background: none; padding: 0 6px; font-style: italic; font-size: 12px; }
.search input::placeholder { color: #555; }
.mag { width: 14px; height: 14px; margin-right: 13px; }
.views { display: flex; gap: 1px; margin: 4px 0 0 17px; width: 251px; border-bottom: 1px solid #c6c6c6; }
.views svg { width: 35px; height: 42px; padding: 6px 5px 9px; border-bottom: 3px solid transparent; }
.views .on { border-color: #0a74c4; }
.contents h3 { margin: 12px 0 0 17px; font-size: 14px; line-height: 22px; color: #3c3c3c; }
.node, .layer { display: flex; align-items: center; height: 27px; font-size: 13px; }
.node { margin-top: 4px; padding-left: 4px; gap: 5px; }
.node svg { width: 18px; height: 18px; margin-right: 1px; }
.tri { width: 0; height: 0; border-left: 7px solid transparent; border-bottom: 7px solid #555; }
.layer { padding-left: 16px; gap: 3px; }
.layer label { display: flex; flex: 1; align-items: center; gap: 6px; height: 27px; margin-right: 1px; padding-left: 1px; background: #c5dbef; border: 1px solid #1579c6; font-size: 12px; }
input[type=checkbox] { appearance: none; display: grid; place-items: center; width: 15px; height: 15px; margin: 0; background: #fff; border: 1px solid #8c8c8c; border-radius: 3px; }
input[type=checkbox]:checked::after { content: ""; width: 5px; height: 9px; margin-top: -3px; border: solid #333; border-width: 0 2px 2px 0; transform: rotate(40deg); }
.sym { width: 8px; height: 8px; margin: 7px 0 0 33px; }

.mapview { display: flex; flex: 1; min-width: 0; flex-direction: column; margin-right: 8px; border: solid #cfd1d4; border-width: 0 1px 1px; background: #fff; }
.maptabs { display: flex; align-items: center; justify-content: space-between; height: 26px; padding-right: 4px; background: #eaeaea; border-bottom: 2px solid #1180d0; color: #555; }
.maptab { display: flex; align-items: center; gap: 7px; width: 85px; height: 26px; padding-left: 6px; background: #0c78ca; border-radius: 3px 3px 0 0; color: #fff; }
.maptab svg { width: 17px; height: 17px; } .maptab .k { width: 11px; height: 11px; margin-left: 2px; }
.canvas { flex: 1; min-height: 0; width: 100%; }
.status { display: flex; align-items: center; gap: 6px; height: 27px; padding: 0 5px 0 6px; background: #f7f8f8; font-size: 12px; color: #444; }
.status > svg { width: 18px; height: 18px; }
.status > .c { width: 12px; height: 7px; margin: 0 auto 0 4px; }
.scale { width: 110px; height: 23px; padding: 0 5px; appearance: none; border: 1px solid #999; border-radius: 0; background: linear-gradient(#555, #555) 96% 50% / 5px 2px no-repeat #f7f8f8; }
.bar { width: 1px; height: 17px; background: #aaa; }
.coords { margin-left: 362px; }
.feat { display: flex; align-items: center; gap: 4px; height: 23px; padding: 0 4px; background: #fff; white-space: nowrap; }
.feat svg { width: 19px; height: 19px; }

.geocol { display: flex; flex-direction: column; width: 355px; flex: none; }
.geo { display: flex; flex: 1; flex-direction: column; }
.toolhead { display: flex; align-items: center; justify-content: space-between; height: 25px; padding: 0 6px; font-size: 15px; }
.toolhead svg { width: 22px; height: 22px; }
.geotabs { display: flex; gap: 14px; height: 36px; padding: 14px 6px 0 10px; font-size: 13px; color: #3c3c3c; }
.geotabs a { height: 23px; line-height: 20px; border-bottom: 2px solid transparent; }
.geotabs .on { border-color: #0a6fc0; font-weight: 500; }
.help { width: 19px; height: 19px; margin-left: auto; border: 1px solid #6fb4e4; border-radius: 50%; background: #d8edfb; color: #2f88c5; text-align: center; font-size: 14px; line-height: 17px; }
.params { padding: 13px 9px 0 20px; font-size: 12px; }
.field label { display: block; line-height: 17px; }
.field { margin-bottom: 4px; }
.field:nth-child(even) { margin-bottom: 5px; }
.check + .field { margin-top: 1px; }
.field input { display: block; width: 100%; height: 24px; padding: 0 4px; border: 1px solid #919191; background: #fff; font-size: 12px; outline: 0; }
.filerow { display: flex; align-items: center; gap: 8px; padding-right: 4px; }
.filerow input { flex: 1; min-width: 0; }
.filerow svg { width: 18px; height: 14px; }
.check { display: flex; align-items: center; gap: 7px; height: 22px; }
.run { display: flex; align-items: center; align-self: flex-end; width: 95px; height: 27px; margin: auto 7px 7px 0; padding: 0 5px 0 12px; border: 1px solid #555; border-radius: 2px; background: #fff; }
.run span { flex: 1; text-align: left; padding-left: 7px; }
.pl { width: 20px; height: 20px; }
.job { display: flex; gap: 6px; padding: 0 10px 6px 7px; font-size: 12px; }
.jobtext { flex: 1; }
.dim { color: #777; }
.progress { height: 6px; margin: 2px 0 0; background: #c9c9c9; }
.progress i { display: block; width: 30%; height: 6px; margin-left: 52%; background: #0c78ca; }
.links { display: flex; gap: 9px; color: #4f8f4f; }
.stop { display: grid; place-items: center; align-self: center; width: 21px; height: 21px; margin-top: 4px; border: 1px solid #666; border-radius: 50%; background: #fff; }
.stop i { width: 10px; height: 10px; border-radius: 2px; background: red; }
.docktabs { display: flex; gap: 0; height: 22px; font-size: 12px; line-height: 20px; color: #444; }
.docktabs a { padding: 0 7px; }
.docktabs .on { background: #f7f8f8; border: solid #cfd1d4; border-width: 0 1px 1px; border-radius: 0 0 3px 3px; color: #0c78ca; }

.window { position: absolute; display: flex; flex-direction: column; border-radius: 9px; overflow: hidden; box-shadow: 0 0 2px rgba(0,0,0,.55), 0 16px 40px rgba(0,0,0,.36); }
.figure { left: 59px; top: 362px; width: 1008px; height: 708px; background: #f0f0f0; }
.titlebar { display: flex; align-items: center; gap: 38px; height: 33px; padding: 0 20px 0 8px; background: #f2f2f2; color: #8a8a8a; font-size: 12px; }
.titlebar svg { width: 12px; height: 12px; }
.titlebar span { flex: 1; margin-left: -33px; }
.titlebar .mpl { width: 20px; height: 20px; }
.plot { width: 100%; flex: 1; min-height: 0; background: #fff; }
.navbar { display: flex; height: 44px; padding: 6px 2px; gap: 1px; }
.navbar button { display: grid; place-items: center; width: 33px; height: 34px; border: solid; border-width: 1px 2px 2px 1px; border-color: #fff #8a8a8a #8a8a8a #fff; }
.navbar svg { width: 23px; height: 23px; }
.navbar i { width: 1px; margin: 2px 5px; background: #bbb; }
.tk { left: 1232px; top: 219px; width: 222px; height: 201px; background: #f0f0f0; }
.tk .titlebar { height: 35px; padding-left: 12px; background: #eef3f9; color: #111; }
.tk .titlebar .feather { width: 12px; height: 22px; }
.tk .titlebar span { margin-left: -28px; }
.tkbody { display: flex; flex-direction: column; align-items: center; gap: 43px; padding: 21px 18px 0 0; color: #111; font-size: 12px; }
.tkbody button { height: 30px; padding: 0 5px; border: 2px solid; border-color: #fff #777 #777 #fff; }
```
FILE: points.js
```js
// Point layer: a regular grid thinned by a quasi-periodic mask, clipped to the survey outline.
const STEP_X = 6.943, STEP_Y = 6.927, X0 = 553, Y0 = 3;

// Last column of each row, as [rows, column] runs.
const rightRuns = [[1,85],[4,84],[3,83],[3,82],[4,81],[4,75],[4,79],[4,78],[9,76],[3,74],[3,73],[2,72],[3,70],[1,71],[1,63],[2,61],[2,59],[1,60],[2,59],[1,57],[1,56],[1,55],[1,48],[1,46],[1,40],[2,39],[1,37],[2,36],[3,36],[2,35],[2,32],[1,30],[2,31],[1,32],[1,33],[1,55],[1,55],[1,53],[1,59],[2,60],[5,59],[2,58],[3,57],[3,56],[2,55],[1,53],[1,52],[9,51],[6,50],[4,49],[2,48],[1,44],[1,46],[5,47],[1,46]];
const right = rightRuns.flatMap(([n, c]) => Array(n).fill(c));

// First column of the main body in the lower rows.
const leftRuns = [[92,0],[1,27],[1,28],[1,32],[1,33],[2,34],[2,35],[2,33],[3,32],[3,30],[6,31],[1,33],[2,34],[1,35],[1,36],[1,35],[2,34],[2,35],[2,36],[4,35],[1,34]];
const left = leftRuns.flatMap(([n, c]) => Array(n).fill(c));

// Empty bands: row -> list of [after column, before column].
const gaps = {12:[[77,80]],13:[[77,80]],14:[[77,80]],40:[[63,66],[66,69]],41:[[63,69]],42:[[63,67]],43:[[61,65]],44:[[61,64]],45:[[61,63]],46:[[59,62]],47:[[57,60]],48:[[48,55]],49:[[48,50]],50:[[47,49]],51:[[41,43]],52:[[39,40]],53:[[38,41]],54:[[38,41]],55:[[37,40]],56:[[36,40]],57:[[35,38]],58:[[35,37]],59:[[33,36]],60:[[32,35]],61:[[30,34]],62:[[25,28],[30,32]],63:[[25,28],[28,32]],64:[[25,30]],65:[[24,27]],66:[[21,25]],67:[[20,24]],79:[[34,41]],80:[[36,41]]};
const bandStart = {48:55,49:50,50:49,51:43,52:40};

// Scattered points outside the outline.
const extra = {57:[65,66,67],58:[64,66],66:[44],76:[49],77:[44,47,48],78:[35,41,42,44,45,46,47,48,50,51,52,53,54,55],
92:[22],95:[22],96:[21,24,25],97:[21,22,24,25,27,28],98:[21,22,23,24,28],99:[22,23,25,26,28,29,30],100:[23,26,27,29],101:[21,23,26,27,28,29],102:[21,22,24,25,27,28],103:[21,24,25,26,27,28],104:[22,23,25],105:[24],106:[21,22,24],107:[21,22,24],108:[21,22,23,24],109:[22,23],110:[21,22,23],111:[21,22,23],112:[21],113:[22,27],115:[24,30],117:[32],118:[26,29],119:[23,26,29],120:[22,23,24,26],121:[23,24,27,28,30],122:[21,22,24,25,27,28,31],123:[21,22,24,25,26,27,28,29,31],124:[23,26,28,29,31],125:[22,23,26,27,29,30],126:[21,23,26,27,28,30],127:[21,22,28,30,31],128:[21,22,23,25,26,28],129:[22,23,25,26,32],130:[7,9,10,11,12,15,17,19,20,22,23,24]};

const noise = (c, r) => { const v = Math.sin(c * 127.1 + r * 311.7) * 43758.5453; return v - Math.floor(v); };
const rowShift = [0, .12, .55, .7];

function density(c, r) {
  if (r > 47 && r < 77) {
    const g = gaps[r];
    const start = bandStart[r] ?? (g && r > 52 ? g[g.length - 1][1] : r > 66 ? 0 : 99);
    if (c >= start) return r < 54 ? .74 : .84;
  }
  if (r > 90) return .79;
  if (r >= 77) return c < 29 ? .76 : .64;
  return .6;
}

function filled(c, r) {
  if (c > right[r] || c < left[r]) return false;
  if ((gaps[r] || []).some(([a, b]) => c > a && c < b)) return false;
  if (c === right[r] || c === left[r] && r > 90) return true;
  const block = Math.floor(r / 4);
  const shift = r > 40 && r < 64 ? (r % 4) * .03 : rowShift[r % 4];
  const wave = (c * .29 + block * .41 + shift + noise(Math.floor(c / 5), block) * .25) % 1;
  return wave * .66 + noise(c, r) * .34 < density(c, r) * .92;
}

let dots = "";
const dot = (c, r, fill) => `<circle cx="${(X0 + c * STEP_X).toFixed(1)}" cy="${(Y0 + r * STEP_Y).toFixed(1)}" r="2.9" fill="${fill}" stroke="#1f1a1e" stroke-width="1.3"/>`;
for (let r = 0; r <= 130; r++) {
  for (let c = 0; c <= 85; c++) {
    if ((r < 130 || c > 33) && filled(c, r) || (extra[r] || []).includes(c)) dots += dot(c, r, "#a8246b");
  }
}
dots += `<circle cx="${X0 + 26 * STEP_X}" cy="${Y0 + 63 * STEP_Y}" r="3.4" fill="#22c3dc"/>`;
document.getElementById("points").innerHTML = dots;
```
